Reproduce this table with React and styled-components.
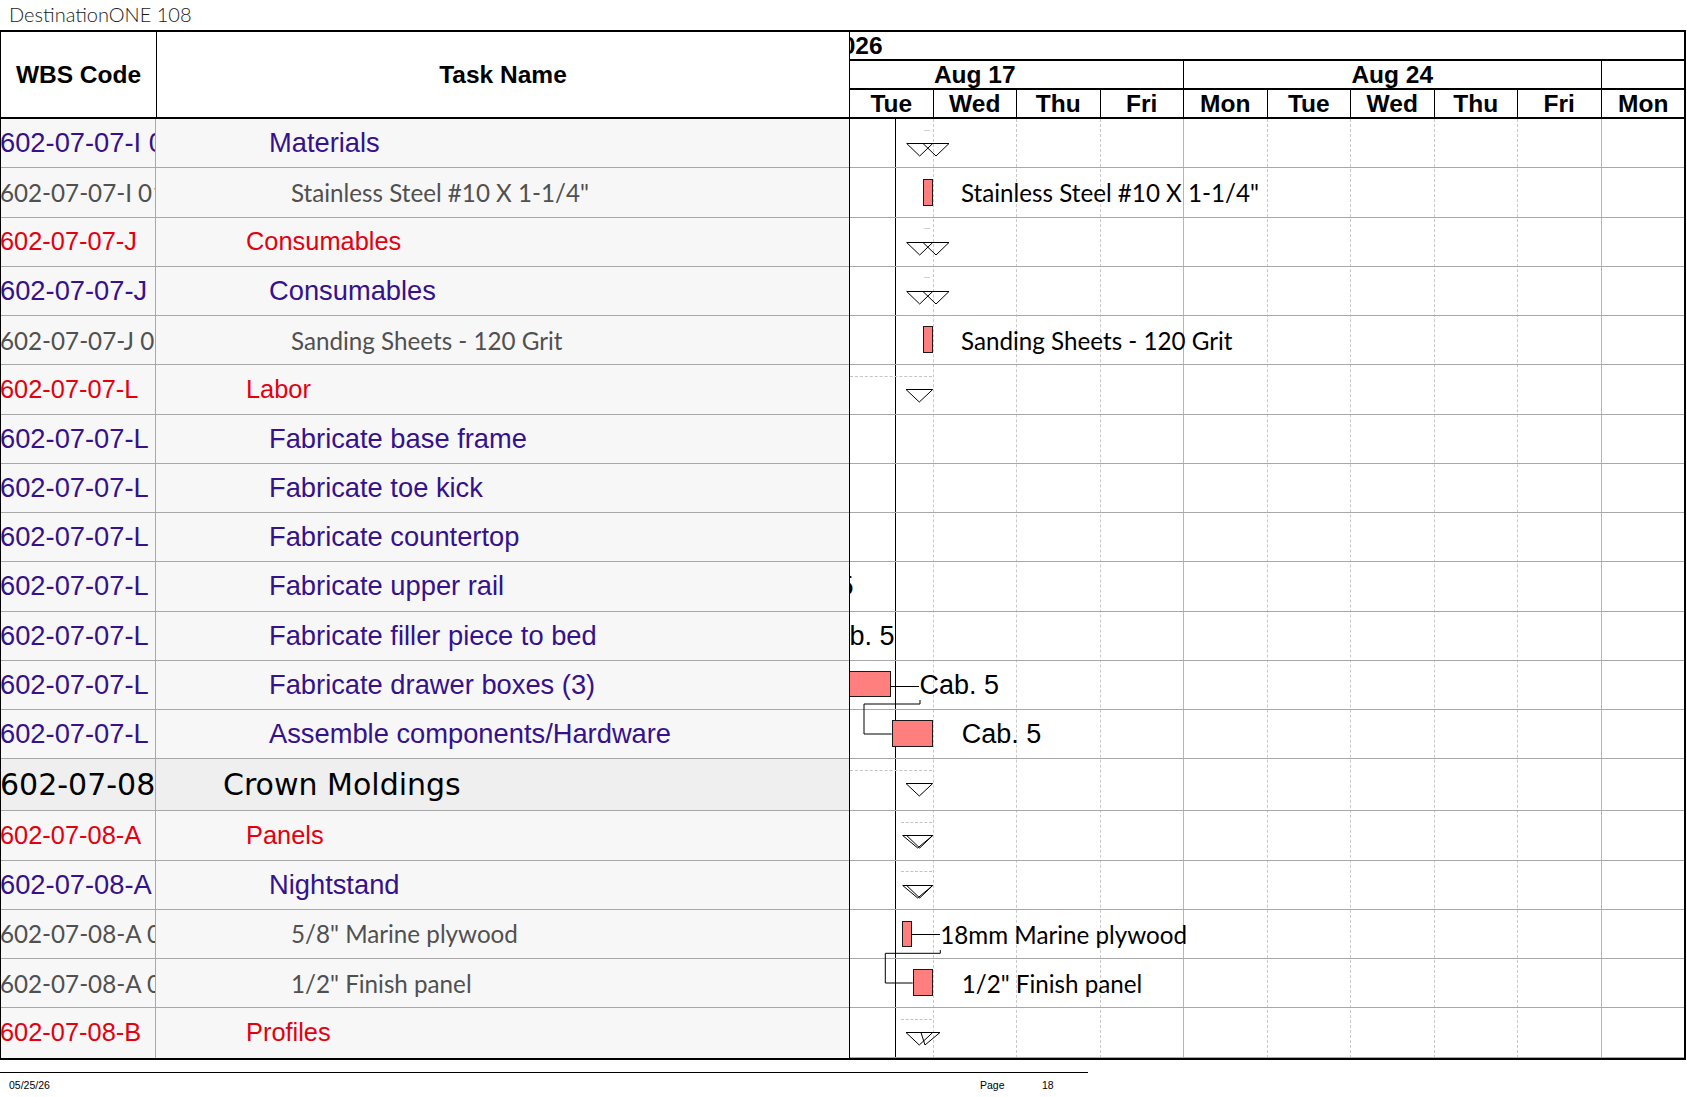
import React from 'react';
import styled, { createGlobalStyle } from 'styled-components';

// Row geometry shared by the task table and the chart
const ROW_H = 49.25;
const CROWN_H = 52;
const DAY_W = 83.5;

const ARIAL = '"Liberation Sans", Arial, sans-serif';
const CALIBRI = 'Lato, "Open Sans", sans-serif';
const TAHOMA = '"DejaVu Sans", Verdana, sans-serif';

const GlobalStyle = createGlobalStyle`
  html, body {
    margin: 0;
    padding: 0;
    background: #fff;
  }
  body {
    width: 1687px;
    height: 1097px;
    overflow: hidden;
    font-family: ${ARIAL};
    color: #000;
  }
`;

const levels = {
  0: { font: TAHOMA, size: 30, color: '#000', indent: 67 },
  1: { font: ARIAL, size: 25.4, color: '#e3000f', indent: 90 },
  2: { font: ARIAL, size: 27.3, color: '#35118c', indent: 113 },
  3: { font: CALIBRI, size: 24.2, color: '#505050', indent: 135 },
};

const rows = [
  { wbs: '602-07-07-I 01', name: 'Materials', level: 2, summary: 'pair', dash: 'tiny' },
  { wbs: '602-07-07-I 01.01', name: 'Stainless Steel #10 X 1-1/4"', level: 3,
    bar: { x: 73.3, w: 9.4, y: 10.3, h: 27 }, label: { x: 111, text: 'Stainless Steel #10 X 1-1/4"' } },
  { wbs: '602-07-07-J', name: 'Consumables', level: 1, summary: 'pair', dash: 'tiny' },
  { wbs: '602-07-07-J 01', name: 'Consumables', level: 2, summary: 'pair', dash: 'tiny' },
  { wbs: '602-07-07-J 01.01', name: 'Sanding Sheets - 120 Grit', level: 3,
    bar: { x: 73.3, w: 9.4, y: 10.3, h: 27 }, label: { x: 111, text: 'Sanding Sheets - 120 Grit' } },
  { wbs: '602-07-07-L', name: 'Labor', level: 1, summary: 'single', dash: 'long' },
  { wbs: '602-07-07-L 01', name: 'Fabricate base frame', level: 2 },
  { wbs: '602-07-07-L 02', name: 'Fabricate toe kick', level: 2 },
  { wbs: '602-07-07-L 03', name: 'Fabricate countertop', level: 2 },
  { wbs: '602-07-07-L 04', name: 'Fabricate upper rail', level: 2,
    label: { x: -76, text: 'Cab. 5', arial: true } },
  { wbs: '602-07-07-L 05', name: 'Fabricate filler piece to bed', level: 2,
    label: { x: -35, text: 'Cab. 5', arial: true } },
  { wbs: '602-07-07-L 06', name: 'Fabricate drawer boxes (3)', level: 2,
    bar: { x: -20, w: 60.7, y: 10.5, h: 26 }, leader: { x: 40.7, w: 28.5, y: 25 },
    label: { x: 69.5, text: 'Cab. 5', arial: true } },
  { wbs: '602-07-07-L 07', name: 'Assemble components/Hardware', level: 2,
    bar: { x: 41.7, w: 41, y: 10.3, h: 27 }, label: { x: 111.7, text: 'Cab. 5', arial: true } },
  { wbs: '602-07-08', name: 'Crown Moldings', level: 0, crown: true, summary: 'single', dash: 'long' },
  { wbs: '602-07-08-A', name: 'Panels', level: 1, summary: 'close', dash: 'short' },
  { wbs: '602-07-08-A 01', name: 'Nightstand', level: 2, summary: 'close', dash: 'short' },
  { wbs: '602-07-08-A 01.01', name: '5/8" Marine plywood', level: 3,
    bar: { x: 52.3, w: 9.4, y: 11, h: 26.3 }, leader: { x: 61.7, w: 28.6, y: 24.5 },
    label: { x: 90.3, text: '18mm Marine plywood' } },
  { wbs: '602-07-08-A 01.02', name: '1/2" Finish panel', level: 3,
    bar: { x: 62.7, w: 20, y: 10.3, h: 27 }, label: { x: 111.7, text: '1/2" Finish panel' } },
  { wbs: '602-07-08-B', name: 'Profiles', level: 1, summary: 'skew', dash: 'short' },
];

// triangle outlines for each kind of summary marker: [left, right, apex]
const markers = {
  pair: [[56.7, 82.7, 69.7], [73, 99, 86]],
  single: [[56, 82.7, 69.3]],
  close: [[52.7, 82.7, 67.7], [56.7, 82.7, 69.7]],
  skew: [[56, 82.7, 69.3], [71, 90, 75]],
};

const days = [
  { d: 'Tue' }, { d: 'Wed' }, { d: 'Thu' }, { d: 'Fri', end: true },
  { d: 'Mon' }, { d: 'Tue' }, { d: 'Wed' }, { d: 'Thu' }, { d: 'Fri', end: true },
  { d: 'Mon' },
];

const weeks = ['Aug 17', 'Aug 24', 'Aug 31'];

const Page = styled.div`
  width: 1687px;
`;

const DocTitle = styled.div`
  height: 30px;
  padding-left: 9px;
  box-sizing: border-box;
  font-family: ${CALIBRI};
  font-weight: 300;
  font-size: 20px;
  line-height: 29px;
  color: #1a1a1a;
`;

const Sheet = styled.div`
  display: flex;
  width: 1686px;
  box-sizing: border-box;
  border-top: 2px solid #000;
  border-bottom: 2px solid #000;
  border-left: 1px solid #000;
`;

const Table = styled.div`
  flex: none;
  width: 848px;
  border-right: 1px solid #000;
`;

const TableHead = styled.div`
  display: grid;
  grid-template-columns: 155px 1fr;
  height: 87px;
  box-sizing: border-box;
  border-bottom: 2px solid #000;
`;

const HeadCell = styled.div`
  display: flex;
  align-items: center;
  justify-content: center;
  font-family: ${ARIAL};
  font-weight: 700;
  font-size: 24.5px;
  & + & {
    border-left: 1px solid #000;
  }
`;

const Row = styled.div`
  display: grid;
  grid-template-columns: 155px 1fr;
  height: ${p => (p.$crown ? CROWN_H : ROW_H)}px;
  box-sizing: border-box;
  border-bottom: 1px solid #a8a8a8;
  background: ${p => (p.$crown ? '#efefef' : '#f7f7f7')};
  &:last-child {
    border-bottom: none;
  }
`;

const Code = styled.div`
  display: flex;
  align-items: center;
  overflow: hidden;
  white-space: nowrap;
  text-indent: -1px;
  border-right: 1px solid #a8a8a8;
  font-family: ${p => levels[p.$level].font};
  font-size: ${p => levels[p.$level].size}px;
  color: ${p => levels[p.$level].color};
`;

const Name = styled.div`
  display: flex;
  align-items: center;
  overflow: hidden;
  white-space: nowrap;
  padding-left: ${p => levels[p.$level].indent}px;
  font-family: ${p => levels[p.$level].font};
  font-size: ${p => levels[p.$level].size}px;
  color: ${p => levels[p.$level].color};
`;

const Gantt = styled.div`
  flex: 1;
  min-width: 0;
  overflow: hidden;
  border-right: 2px solid #000;
`;

const Band = styled.div`
  display: flex;
  height: 29px;
  box-sizing: border-box;
  border-bottom: 2px solid #000;
  overflow: hidden;
  white-space: nowrap;
  font-family: ${ARIAL};
  font-weight: 700;
  font-size: 24.5px;
  line-height: 27px;
`;

const YearLabel = styled.span`
  margin-left: -22px;
`;

const WeekCell = styled.div`
  flex: none;
  width: ${DAY_W * 5}px;
  box-sizing: border-box;
  text-align: center;
  border-right: 1px solid #000;
  &:first-child {
    margin-left: -${DAY_W}px;
  }
`;

const DayCell = styled.div`
  flex: none;
  width: ${DAY_W}px;
  box-sizing: border-box;
  text-align: center;
  border-right: 1px solid #000;
  &:last-child {
    border-right: none;
  }
`;

const ChartBody = styled.div`
  position: relative;
`;

const Columns = styled.div`
  position: absolute;
  inset: 0;
  display: grid;
  grid-template-columns: repeat(10, ${DAY_W}px);
`;

const DayLine = styled.div`
  border-right: 1px ${p => (p.$end ? 'solid #b5b5b5' : 'dashed #c9c9c9')};
  &:last-child {
    border-right: 1px solid #1e1e8c;
  }
`;

const TodayLine = styled.div`
  position: absolute;
  top: 0;
  bottom: 0;
  left: 45px;
  width: 1px;
  background: #000;
`;

const Lane = styled.div`
  position: relative;
  height: ${p => (p.$crown ? CROWN_H : ROW_H)}px;
  box-sizing: border-box;
  border-bottom: 1px solid #a8a8a8;
  &:last-child {
    border-bottom: none;
  }
`;

const Bar = styled.div`
  position: absolute;
  left: ${p => p.$x}px;
  top: ${p => p.$y}px;
  width: ${p => p.$w}px;
  height: ${p => p.$h}px;
  box-sizing: border-box;
  background: #ff7f7f;
  border: 1px solid #1a1a1a;
`;

const Leader = styled.div`
  position: absolute;
  left: ${p => p.$x}px;
  top: ${p => p.$y}px;
  width: ${p => p.$w}px;
  border-top: 1px solid #000;
`;

const BarLabel = styled.span`
  position: absolute;
  left: ${p => p.$x}px;
  top: 50%;
  transform: translateY(-50%);
  white-space: nowrap;
  font-family: ${p => (p.$arial ? ARIAL : CALIBRI)};
  font-size: ${p => (p.$arial ? 27 : 24.2)}px;
  color: #000;
`;

const Dash = styled.div`
  position: absolute;
  top: 10.5px;
  left: ${p => ({ tiny: 74, short: 51, long: 0 }[p.$kind])}px;
  width: ${p => ({ tiny: 6, short: 31, long: 82 }[p.$kind])}px;
  border-top: 1px ${p => (p.$kind === 'tiny' ? 'solid #cfcfcf' : 'dashed #c4c4c4')};
`;

const MarkerSvg = styled.svg`
  position: absolute;
  left: 0;
  top: 24px;
  overflow: visible;
`;

const Links = styled.svg`
  position: absolute;
  left: 0;
  top: 0;
  width: 100%;
  height: 100%;
  overflow: visible;
  pointer-events: none;
`;

const Footer = styled.div`
  display: grid;
  grid-template-columns: 971px 62px 1fr;
  align-items: center;
  width: 1088px;
  height: 25px;
  margin-top: 12px;
  padding-left: 9px;
  box-sizing: border-box;
  border-top: 1px solid #000;
  font-family: ${ARIAL};
  font-size: 10.5px;
  color: #000;
`;

const Summary = ({ kind }) => (
  <MarkerSvg width="100" height="14">
    {markers[kind].map(([l, r, a], i) => (
      <polygon key={i} points={`${l},0.5 ${r},0.5 ${a},13`} fill="none" stroke="#000" strokeWidth="1" />
    ))}
  </MarkerSvg>
);

export default function App() {
  return (
    <Page>
      <GlobalStyle />
      <DocTitle>DestinationONE 108</DocTitle>
      <Sheet>
        <Table>
          <TableHead>
            <HeadCell>WBS Code</HeadCell>
            <HeadCell>Task Name</HeadCell>
          </TableHead>
          {rows.map((r, i) => (
            <Row key={i} $crown={r.crown}>
              <Code $level={r.level}>{r.wbs}</Code>
              <Name $level={r.level}>{r.name}</Name>
            </Row>
          ))}
        </Table>

        <Gantt>
          <Band>
            <YearLabel>2026</YearLabel>
          </Band>
          <Band>
            {weeks.map(w => (
              <WeekCell key={w}>{w}</WeekCell>
            ))}
          </Band>
          <Band>
            {days.map((d, i) => (
              <DayCell key={i}>{d.d}</DayCell>
            ))}
          </Band>

          <ChartBody>
            <Columns>
              {days.map((d, i) => (
                <DayLine key={i} $end={d.end} />
              ))}
            </Columns>
            <TodayLine />
            {rows.map((r, i) => (
              <Lane key={i} $crown={r.crown}>
                {r.dash && <Dash $kind={r.dash} />}
                {r.summary && <Summary kind={r.summary} />}
                {r.bar && <Bar $x={r.bar.x} $y={r.bar.y} $w={r.bar.w} $h={r.bar.h} />}
                {r.leader && <Leader $x={r.leader.x} $y={r.leader.y} $w={r.leader.w} />}
                {r.label && (
                  <BarLabel $x={r.label.x} $arial={r.label.arial}>
                    {r.label.text}
                  </BarLabel>
                )}
              </Lane>
            ))}
            <Links>
              <path d="M70 581 V585 H14 V615 H41.7" fill="none" stroke="#000" strokeWidth="1" />
              <path d="M90.3 831 V834.3 H35.3 V864 H62.7" fill="none" stroke="#000" strokeWidth="1" />
            </Links>
          </ChartBody>
        </Gantt>
      </Sheet>
      <Footer>
        <span>05/25/26</span>
        <span>Page</span>
        <span>18</span>
      </Footer>
    </Page>
  );
}
